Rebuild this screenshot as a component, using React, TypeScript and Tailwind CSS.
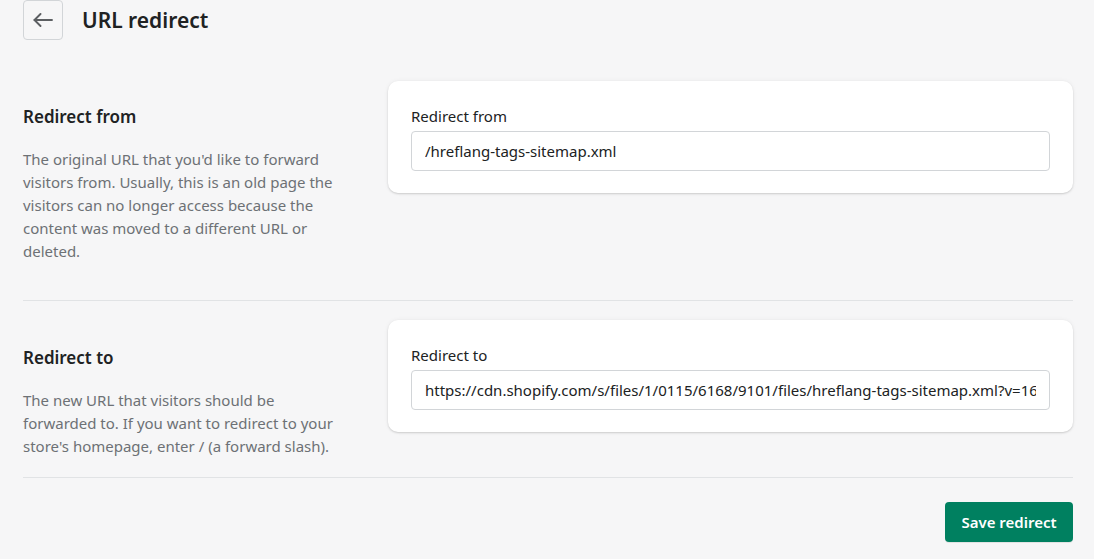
const Section = ({
  title,
  description,
  label,
  value,
  className,
  headPad,
}: {
  title: string;
  description: string;
  label: string;
  value: string;
  className: string;
  headPad: string;
}) => {
  return (
    <section className={`flex items-start gap-5 border-b border-[#e1e3e5] ${className}`}>
      <div className={`w-[345px] shrink-0 ${headPad}`}>
        <h2 className="text-[17px] leading-6 font-semibold text-[#202223]">{title}</h2>
        <p className="mt-[19px] max-w-[320px] text-[15px] leading-[23px] text-[#6d7175]">{description}</p>
      </div>
      <div className="flex-1 rounded-[10px] bg-white px-[23px] pt-[25px] pb-[22px] shadow-[0_0_5px_rgba(23,24,24,0.05),0_1px_2px_rgba(0,0,0,0.15)]">
        <label className="block text-[15px] leading-5 text-[#202223]">{label}</label>
        <div className="mt-[5px] h-10 overflow-hidden rounded-[4px] border border-[#d2d5d8] bg-white">
          <input
            readOnly
            value={value}
            className="h-full w-full bg-transparent px-[13px] text-[15px] text-[#202223] outline-none"
          />
        </div>
      </div>
    </section>
  );
};

const App = () => {
  return (
    <div className="min-h-screen bg-[#f6f6f7] pl-[23px] pr-[21px] font-['Noto_Sans',sans-serif]">
      <header className="flex h-10 items-center gap-[19px]">
        <button className="flex h-10 w-10 items-center justify-center rounded-[4px] border border-[#d2d5d8] text-[#5c5f62]">
          {/* back arrow, wider than it is tall */}
          <svg width="20" height="14" viewBox="0 0 20 14" fill="none" stroke="currentColor" strokeWidth="1.9" strokeLinecap="round" strokeLinejoin="round">
            <path d="M19 7H1.5" />
            <path d="M7.5 1L1.5 7l6 6" />
          </svg>
        </button>
        <h1 className="mt-0.5 text-[21px] font-semibold text-[#202223]">URL redirect</h1>
      </header>

      <Section
        className="mt-[41px] pb-[37px]"
        headPad="pt-6"
        title="Redirect from"
        description="The original URL that you'd like to forward visitors from. Usually, this is an old page the visitors can no longer access because the content was moved to a different URL or deleted."
        label="Redirect from"
        value="/hreflang-tags-sitemap.xml"
      />

      <Section
        className="pt-[19px] pb-[19px]"
        headPad="pt-[26px]"
        title="Redirect to"
        description="The new URL that visitors should be forwarded to. If you want to redirect to your store's homepage, enter / (a forward slash)."
        label="Redirect to"
        value="https://cdn.shopify.com/s/files/1/0115/6168/9101/files/hreflang-tags-sitemap.xml?v=1646230215"
      />

      <div className="mt-6 flex justify-end">
        <button className="h-10 w-[128px] rounded-[4px] bg-[#008060] text-[15px] font-semibold text-white shadow-[0_1px_0_rgba(0,0,0,0.08)]">
          Save redirect
        </button>
      </div>
    </div>
  );
};

export default App;
